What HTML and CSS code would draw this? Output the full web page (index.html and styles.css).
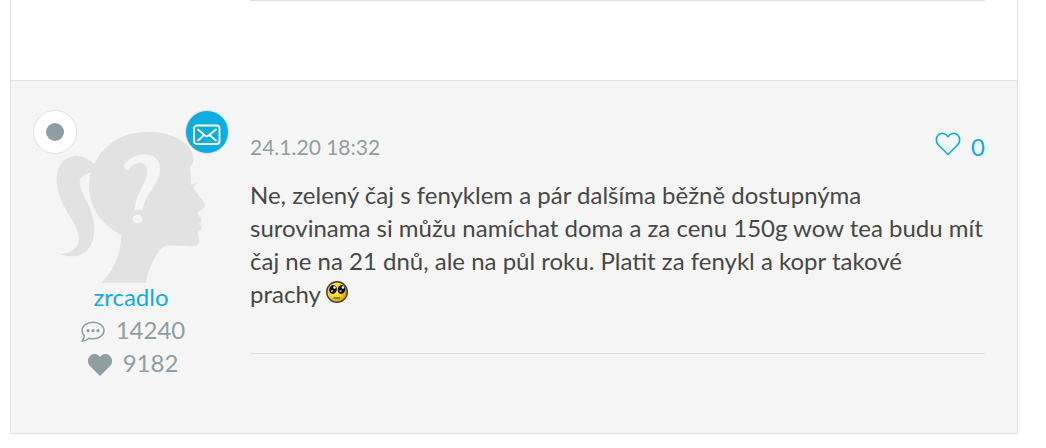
FILE: index.html
```html
<!DOCTYPE html>
<html lang="cs">
  <head>
    <meta charset="UTF-8" />
    <meta name="viewport" content="width=device-width, initial-scale=1.0" />
    <title>Diskuze</title>
    <link rel="stylesheet" href="styles.css">
  </head>
  <body>
    <main class="thread">
      <!-- konec předchozího příspěvku -->
      <article class="post">
        <div class="post-author"></div>
        <div class="post-content">
          <hr class="post-divider" />
        </div>
      </article>

      <article class="post post-alt">
        <aside class="post-author">
          <div class="avatar-box">
            <span class="badge badge-status"></span>
            <svg class="avatar" viewBox="168 216 450 453" aria-hidden="true">
              <path fill="#e2e2e2" d="M303 669 C344 629 363 581 364 526 C303 492 266 441 267 375 C267 361 269 349 273 337 C253 343 240 351 239 366 C240 407 283 438 283 510 C282 557 257 589 218 589 C203 589 190 586 179 582 C213 582 236 563 237 537 C238 488 170 439 170 356 C171 315 196 288 231 288 C252 289 269 300 284 312 C310 250 374 215 449 215 C514 216 581 249 580 300 C580 309 576 315 570 318 C573 338 573 357 573 374 C581 374 586 371 589 366 C589 373 585 378 579 381 C588 398 600 411 609 422 C620 437 614 446 595 454 C592 459 594 464 597 468 C606 473 607 483 601 488 L595 492 C606 492 607 506 602 511 L594 516 C593 525 600 537 597 546 C594 557 584 560 568 559 L507 556 C491 557 481 568 470 584 C455 609 443 635 438 669 Z" />
              <path fill="#f5f5f5" d="M370 321 C381 298 404 284 432 283 C464 283 481 301 480 329 C479 376 432 400 429 451 L404 451 C406 397 441 374 442 332 C442 307 416 302 397 316 C392 320 388 326 385 333 Z" />
              <ellipse cx="413" cy="477" rx="15" ry="13" fill="#f5f5f5" />
            </svg>
            <a class="badge badge-mail" href="#" aria-label="Napsat zprávu">
              <svg class="mail-icon" viewBox="0 0 28 22" fill="none" stroke="#fff" stroke-linecap="round" aria-hidden="true">
                <rect x="1" y="1.5" width="25.500" height="18.500" rx="3" stroke-width="1.800" />
                <path d="M5 5.500 L12 11.500 Q13.800 13 15.500 11.500 L23 5.500 M5 16.500 L10.500 11.500 M17 11.500 L23 16.500" stroke-width="1.800" />
              </svg>
            </a>
          </div>
          <a class="user-name" href="#">zrcadlo</a>
          <div class="user-stat">
            <svg class="stat-icon" viewBox="0 0 24 22" aria-hidden="true">
              <path d="M3.3 14.7 C1.8 13.2 1 11.4 1 9.5 C1 4.9 5.9 1.2 12 1.2 S23 4.9 23 9.5 S18.1 17.8 12 17.8 C10.6 17.8 9.3 17.6 8 17.2 C6 18.9 3.7 19.9 1 20 C2.5 18.5 3.3 16.9 3.3 14.7 Z" fill="none" stroke="#8f9ea3" stroke-width="1.5" stroke-linejoin="round" />
              <g fill="#8f9ea3">
                <circle cx="7" cy="9.7" r="1.6" />
                <circle cx="12" cy="9.7" r="1.6" />
                <circle cx="17" cy="9.7" r="1.6" />
              </g>
            </svg>
            <span>14240</span>
          </div>
          <div class="user-stat">
            <svg class="stat-icon" viewBox="0 0 24 22" aria-hidden="true">
              <path d="M12 22 L2 12 C-1 9 -0.5 4 2.3 1.7 C5.5 -1 10 -0.3 12 3.2 C14 -0.3 18.5 -1 21.7 1.7 C24.5 4 25 9 22 12 Z" fill="#8f9ea3" />
            </svg>
            <span>9182</span>
          </div>
        </aside>

        <div class="post-content">
          <header class="post-header">
            <time class="post-date" datetime="2020-01-24T18:32">24.1.20 18:32</time>
            <button class="like-button" type="button">
              <svg class="like-icon" viewBox="0 0 26 24" aria-hidden="true">
                <path d="M13 22.5 L3.4 12.9 C0.6 10 0.7 5.2 3.4 2.9 C6.400 0.400 10.7 1 13 4.800 C15.3 1 19.6 0.400 22.6 2.9 C25.3 5.2 25.4 10 22.6 12.9 Z" fill="none" stroke="#0eade0" stroke-width="1.6" stroke-linejoin="round" />
              </svg>
              <span>0</span>
            </button>
          </header>
          <p class="post-text">
            Ne, zelený čaj s fenyklem a pár dalšíma běžně dostupnýma surovinama si můžu namíchat doma a za cenu 150g wow tea budu mít čaj ne na 21 dnů, ale na půl roku. Platit za fenykl a kopr takové
            <span class="nowrap">prachy
              <svg class="smiley" viewBox="0 0 22 22" aria-hidden="true">
                <defs>
                  <radialGradient id="face" cx="0.4" cy="0.4" r="0.65">
                    <stop offset="0" stop-color="#fff36a" />
                    <stop offset="0.6" stop-color="#f6d414" />
                    <stop offset="1" stop-color="#d98c08" />
                  </radialGradient>
                </defs>
                <circle cx="11" cy="11" r="10.3" fill="url(#face)" stroke="#43423c" stroke-width="1.4" />
                <ellipse cx="7" cy="8.5" rx="3.8" ry="4.5" fill="#111" transform="rotate(15 7 8.5)" />
                <ellipse cx="15.5" cy="8.5" rx="3.8" ry="4.5" fill="#111" transform="rotate(15 15.5 8.5)" />
                <circle cx="8.5" cy="6.5" r="1.3" fill="#fff" />
                <circle cx="17" cy="6.5" r="1.3" fill="#fff" />
                <circle cx="6" cy="10" r="1.1" fill="#bbb" />
                <circle cx="14.5" cy="10" r="1.1" fill="#bbb" />
                <path d="M7.5 17 H14" stroke="#7b5206" stroke-width="1.5" />
              </svg></span>
          </p>
          <hr class="post-divider" />
        </div>
      </article>
    </main>
  </body>
</html>
```
FILE: styles.css
```css
* {
  box-sizing: border-box;
}

body {
  margin: 0;
  font-family: Lato, "Liberation Sans", sans-serif;
  font-size: 24px;
  line-height: 33px;
  color: #474747;
  background: #fff;
}

a {
  color: #0eade0;
  text-decoration: none;
}

.nowrap {
  white-space: nowrap;
}

.thread {
  margin: 0 28px 15px 10px;
  border: 1px solid #e0e0e0;
  border-top: none;
}

/* příspěvek */
.post {
  display: flex;
  gap: 21px;
  padding: 0 32px 50px 22px;
}
.post-alt {
  padding-top: 29px;
  background: #f5f5f5;
  border-top: 1px solid #e0e0e0;
}
.post-divider {
  height: 1px;
  margin: 0 0 29px;
  border: none;
  background: #e0e0e0;
}

/* autor */
.post-author {
  display: flex;
  flex-direction: column;
  align-items: center;
  flex: 0 0 196px;
}
.avatar-box {
  position: relative;
  width: 100%;
  height: 170px;
  padding: 22px 23px 0;
}
.avatar {
  display: block;
  width: 150px;
  height: 151px;
}
.badge {
  position: absolute;
  top: 0;
  display: flex;
  align-items: center;
  justify-content: center;
  width: 44px;
  height: 44px;
  border: 1px solid #e0e0e0;
  border-radius: 50%;
}
.badge-status {
  left: 0;
  background: #fff;
}
.badge-status::before {
  content: "";
  width: 18px;
  height: 18px;
  border-radius: 50%;
  background: #8f9ea3;
}
.badge-mail {
  right: 0;
  padding-top: 6px;
  background: #0eade0;
}
.mail-icon {
  width: 28px;
  height: 22px;
}
.user-stat {
  display: flex;
  align-items: center;
  gap: 11px;
  padding-left: 4px;
  color: #8f9ea3;
}
.stat-icon {
  width: 24px;
  height: 22px;
  margin-top: 4px;
}

/* obsah */
.post-content {
  flex: 1;
  min-width: 0;
}
.post-header {
  display: flex;
  align-items: center;
  justify-content: space-between;
  padding: 20px 0 15px;
}
.post-date {
  font-size: 21px;
  color: #8f9ea3;
}
.like-button {
  display: flex;
  align-items: center;
  gap: 10px;
  padding: 0;
  border: none;
  background: none;
  font: inherit;
  color: #0eade0;
  cursor: pointer;
}
.like-icon {
  width: 26px;
  height: 24px;
  margin-bottom: 5px;
}
.post-text {
  margin: 0 0 43px;
}
.smiley {
  width: 22px;
  height: 22px;
  margin-top: 4px;
  vertical-align: top;
}
```
